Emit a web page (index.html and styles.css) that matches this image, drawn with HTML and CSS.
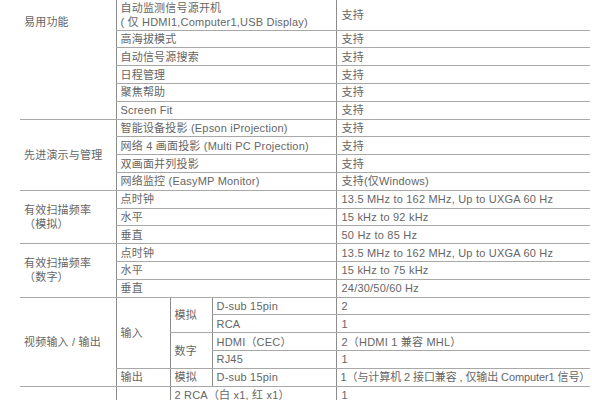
FILE: index.html
```html
<!DOCTYPE html>
<html lang="zh">
<head>
<meta charset="utf-8">
<link rel="stylesheet" href="styles.css">
</head>
<body>
<table class="spec">
  <colgroup>
    <col class="c1"><col class="c2"><col class="c3"><col class="c4"><col class="c5">
  </colgroup>
  <tbody>
    <tr class="tall">
      <td rowspan="6" class="label label-top">易用功能</td>
      <td colspan="3">自动监测信号源开机<br>( 仅 HDMI1,Computer1,USB Display)</td>
      <td class="val">支持</td>
    </tr>
    <tr><td colspan="3">高海拔模式</td><td class="val">支持</td></tr>
    <tr><td colspan="3">自动信号源搜索</td><td class="val">支持</td></tr>
    <tr><td colspan="3">日程管理</td><td class="val">支持</td></tr>
    <tr><td colspan="3">聚焦帮助</td><td class="val">支持</td></tr>
    <tr><td colspan="3">Screen Fit</td><td class="val">支持</td></tr>

    <tr>
      <td rowspan="4" class="label">先进演示与管理</td>
      <td colspan="3">智能设备投影 (Epson iProjection)</td><td class="val">支持</td>
    </tr>
    <tr><td colspan="3">网络 4 画面投影 (Multi PC Projection)</td><td class="val">支持</td></tr>
    <tr><td colspan="3">双画面并列投影</td><td class="val">支持</td></tr>
    <tr><td colspan="3">网络监控 (EasyMP Monitor)</td><td class="val">支持(仅Windows)</td></tr>

    <tr>
      <td rowspan="3" class="label">有效扫描频率<br>（模拟）</td>
      <td colspan="3">点时钟</td><td class="val">13.5 MHz to 162 MHz, Up to UXGA 60 Hz</td>
    </tr>
    <tr><td colspan="3">水平</td><td class="val">15 kHz to 92 kHz</td></tr>
    <tr><td colspan="3">垂直</td><td class="val">50 Hz to 85 Hz</td></tr>

    <tr>
      <td rowspan="3" class="label">有效扫描频率<br>（数字）</td>
      <td colspan="3">点时钟</td><td class="val">13.5 MHz to 162 MHz, Up to UXGA 60 Hz</td>
    </tr>
    <tr><td colspan="3">水平</td><td class="val">15 kHz to 75 kHz</td></tr>
    <tr><td colspan="3">垂直</td><td class="val">24/30/50/60 Hz</td></tr>

    <tr>
      <td rowspan="5" class="label">视频输入 / 输出</td>
      <td rowspan="4">输入</td>
      <td rowspan="2">模拟</td>
      <td>D-sub 15pin</td><td class="val">2</td>
    </tr>
    <tr><td>RCA</td><td class="val">1</td></tr>
    <tr>
      <td rowspan="2">数字</td>
      <td>HDMI（CEC）</td><td class="val">2（HDMI 1 兼容 MHL）</td>
    </tr>
    <tr><td>RJ45</td><td class="val">1</td></tr>
    <tr>
      <td>输出</td><td>模拟</td><td>D-sub 15pin</td>
      <td class="val long">1（与计算机 2 接口兼容 , 仅输出 Computer1 信号）</td>
    </tr>

    <tr>
      <td class="label"></td>
      <td></td>
      <td colspan="2">2 RCA（白 x1, 红 x1）</td><td class="val">1</td>
    </tr>
  </tbody>
</table>
</body>
</html>
```
FILE: styles.css
```css
html, body {
  margin: 0;
  padding: 0;
  background: #ffffff;
}

body {
  font-family: "Liberation Sans", "Noto Sans CJK SC", sans-serif;
  font-size: 11px;
  letter-spacing: 0.2px;
  color: #666666;
  overflow: hidden;
}

.spec {
  margin-left: 20px;
  width: 570px;
  border-collapse: collapse;
  table-layout: fixed;
}

.c1 { width: 96px; }
.c2 { width: 54px; }
.c3 { width: 42px; }
.c4 { width: 124px; }
.c5 { width: 254px; }

.spec td {
  height: 16.8px;
  padding: 0 4px;
  line-height: 14px;
  border-top: 1px solid #a8a8a8;
  border-bottom: 1px solid #a8a8a8;
  border-left: 1px solid #8c8c8c;
  vertical-align: middle;
  white-space: nowrap;
  overflow: visible;
}

.spec tr:first-child td {
  border-top: none;
}

.spec td.label {
  border-left: none;
  padding-left: 4px;
}

.spec td.label-top {
  vertical-align: top;
  padding-top: 15px;
}

.spec td.val {
  padding-left: 5px;
}

.spec td.long {
  letter-spacing: -0.1px;
  padding-left: 4px;
}

.spec tr.tall td {
  height: 29.7px;
}
```
